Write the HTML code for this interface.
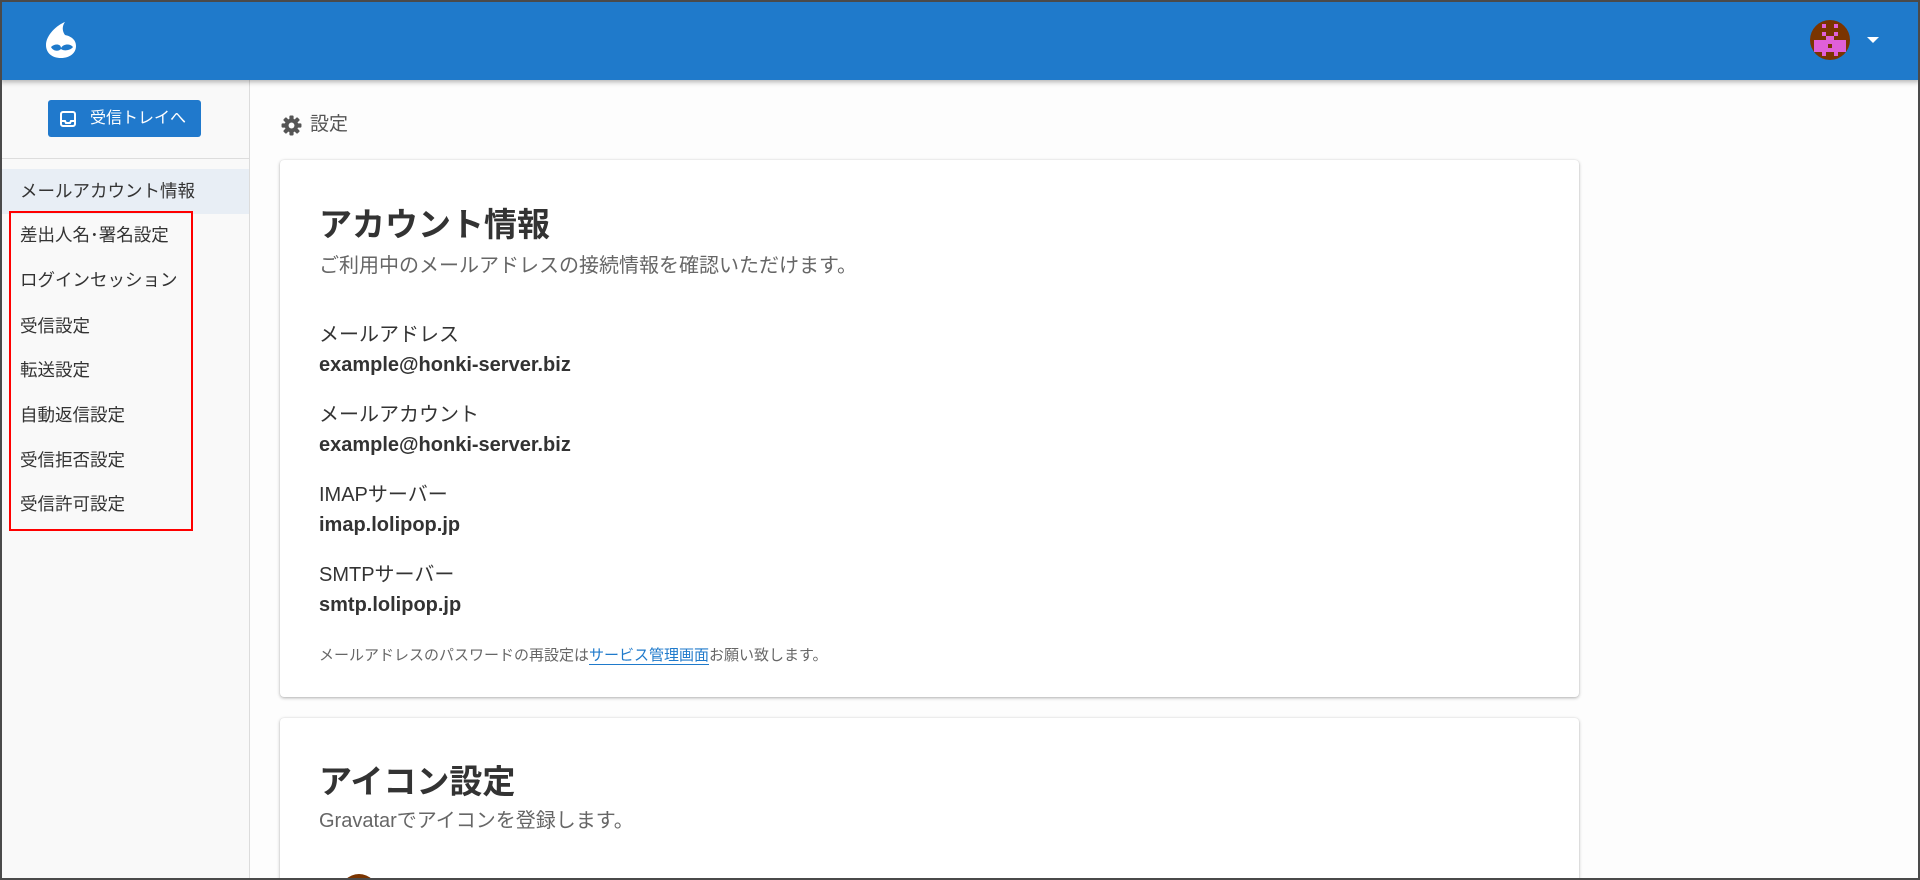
<!DOCTYPE html>
<html><head><meta charset="utf-8"><style>
*{margin:0;padding:0;box-sizing:border-box}
html,body{width:1920px;height:880px;overflow:hidden}
body{background:#fdfdfd;font-family:"Liberation Sans","Noto Sans CJK JP",sans-serif;color:#333;position:relative}
.frame{position:absolute;left:0;top:0;width:1920px;height:880px;border:2px solid #4a4a4a;pointer-events:none;z-index:10}
.hdr{position:absolute;left:0;top:0;width:1920px;height:80px;background:#1f7acb;box-shadow:0 2px 5px rgba(0,0,0,.3);z-index:5}
.side{position:absolute;left:0;top:80px;width:250px;height:800px;background:#f9f9f9;border-right:1px solid #dcdcdc}
.btn{position:absolute;left:48px;top:20px;width:153px;height:37px;background:#2079cc;border-radius:3px;color:#fff;font-size:16px;line-height:37px;padding-left:42px}
.btn svg{position:absolute;left:12px;top:11px}
.div{position:absolute;left:0;top:78px;width:249px;border-top:1px solid #ddd}
.item{position:absolute;left:20px;font-size:17.5px;color:#333;line-height:20px;white-space:nowrap}
.act{position:absolute;left:0;top:89px;width:249px;height:45px;background:#e8eef5}
.red{position:absolute;left:9px;top:131px;width:184px;height:320px;border:2px solid #f00}
.crumb{position:absolute;left:281px;top:113px;font-size:19px;color:#555;line-height:24px}
.crumb span{position:absolute;left:29px;top:0;white-space:nowrap}
.card{position:absolute;left:280px;width:1299px;background:#fff;border-radius:4px;box-shadow:0 1px 3px rgba(0,0,0,.3),0 0 1px rgba(0,0,0,.1);overflow:hidden}
.t{position:absolute;left:39px;white-space:nowrap}
.h{font-size:33px;font-weight:bold;color:#333;line-height:40px}
.sub{font-size:20px;color:#666;line-height:24px}
.lab{font-size:20px;color:#333;line-height:24px}
.val{font-size:20px;font-weight:bold;color:#333;line-height:24px}
.note{font-size:15px;color:#666;line-height:18px}
.note a{color:#1f7acb;text-decoration:none;border-bottom:1px solid #1f7acb}
</style></head><body>
<div class="hdr">
<svg style="position:absolute;left:43px;top:21px" width="36" height="38" viewBox="0 0 36 38"><path d="M22 1 C14 4 3 14 3 24 C3 32 9 37 18 37 C27 37 33 32 33 25 C33 18 27 15 22 14 C19 10 19 5 22 1Z" fill="#fff"/><path d="M8 26 C12 22 18 23 18 27 C20 23 27 22 30 26 C27 30 20 30 18 28 C15 31 10 30 8 26Z" fill="#1f7acb"/></svg>
<svg style="position:absolute;left:1810px;top:20px" width="40" height="40" viewBox="0 0 40 40"><circle cx="20" cy="20" r="20" fill="#7a3400"/><g fill="#e060d8"><rect x="12" y="4" width="4" height="4"/><rect x="24" y="4" width="4" height="4"/><rect x="12" y="12" width="4" height="4"/><rect x="24" y="12" width="4" height="4"/><rect x="4" y="20" width="32" height="12"/><rect x="12" y="32" width="4" height="4"/><rect x="24" y="32" width="4" height="4"/><rect x="16" y="16" width="8" height="4"/></g><rect x="18" y="24" width="4" height="4" fill="#7a3400"/></svg>
<svg style="position:absolute;left:1867px;top:37px" width="12" height="7" viewBox="0 0 12 7"><path d="M0 0H12L6 6Z" fill="#fff"/></svg>
</div>
<div class="side">
<div class="btn"><svg width="16" height="16" viewBox="0 0 16 16"><rect x="1" y="1" width="14" height="14" rx="2" fill="none" stroke="#fff" stroke-width="2"/><path d="M1 10H5L6 12H10L11 10H15" fill="none" stroke="#fff" stroke-width="2"/></svg>受信トレイへ</div>
<div class="div"></div>
<div class="act"></div>
<div class="item" style="top:101px">メールアカウント情報</div>
<div class="item" style="top:145px">差出人名･署名設定</div>
<div class="item" style="top:190px">ログインセッション</div>
<div class="item" style="top:236px">受信設定</div>
<div class="item" style="top:280px">転送設定</div>
<div class="item" style="top:325px">自動返信設定</div>
<div class="item" style="top:370px">受信拒否設定</div>
<div class="item" style="top:414px">受信許可設定</div>
<div class="red"></div>
</div>
<div class="crumb"><svg width="21" height="21" viewBox="0 0 20 20" style="position:absolute;left:0;top:2px"><g fill="#555"><circle cx="10" cy="10" r="6.5"/><g><rect x="8" y="0.5" width="4" height="4" rx="1"/><rect x="8" y="15.5" width="4" height="4" rx="1"/><rect x="0.5" y="8" width="4" height="4" rx="1"/><rect x="15.5" y="8" width="4" height="4" rx="1"/></g><g transform="rotate(45 10 10)"><rect x="8" y="0.5" width="4" height="4" rx="1"/><rect x="8" y="15.5" width="4" height="4" rx="1"/><rect x="0.5" y="8" width="4" height="4" rx="1"/><rect x="15.5" y="8" width="4" height="4" rx="1"/></g></g><circle cx="10" cy="10" r="2.8" fill="#fdfdfd"/></svg><span>設定</span></div>
<div class="card" style="top:160px;height:537px">
<div class="t h" style="top:45px">アカウント情報</div>
<div class="t sub" style="top:94px">ご利用中のメールアドレスの接続情報を確認いただけます。</div>
<div class="t lab" style="top:163px">メールアドレス</div>
<div class="t val" style="top:193px">example@honki-server.biz</div>
<div class="t lab" style="top:243px">メールアカウント</div>
<div class="t val" style="top:273px">example@honki-server.biz</div>
<div class="t lab" style="top:323px">IMAPサーバー</div>
<div class="t val" style="top:353px">imap.lolipop.jp</div>
<div class="t lab" style="top:403px">SMTPサーバー</div>
<div class="t val" style="top:433px">smtp.lolipop.jp</div>
<div class="t note" style="top:487px">メールアドレスのパスワードの再設定は<a>サービス管理画面</a>お願い致します。</div>
</div>
<div class="card" style="top:718px;height:162px;border-radius:4px 4px 0 0">
<div class="t h" style="top:44px">アイコン設定</div>
<div class="t sub" style="top:91px">Gravatarでアイコンを登録します。</div>
<div style="position:absolute;left:60px;top:156px;width:38px;height:38px;border-radius:50%;background:#7a3400"></div>
</div>
<div class="frame"></div>
</body></html>
